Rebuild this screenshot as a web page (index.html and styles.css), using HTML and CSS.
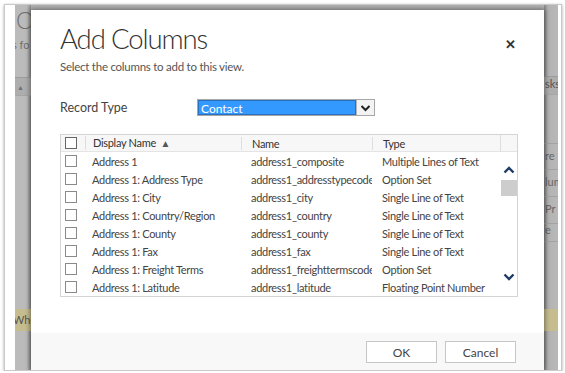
FILE: index.html
```html
<!DOCTYPE html>
<html lang="en">
<head>
    <meta charset="UTF-8">
    <title>Add Columns</title>
    <link rel="stylesheet" href="styles.css">
</head>
<body>
<div class="frame">
    <div class="backdrop">
        <div class="page page-left">
            <div class="pg-title">O</div>
            <div class="pg-sub">s fo</div>
            <div class="pg-bar">&#9650;</div>
            <div class="pg-fill"></div>
            <div class="pg-note">Whe</div>
        </div>

        <div class="dialog">
            <div class="dlg-head">
                <h1>Add Columns</h1>
                <span class="close">&#x2715;</span>
            </div>
            <p class="hint">Select the columns to add to this view.</p>

            <div class="field">
                <label>Record Type</label>
                <div class="select">
                    <span class="select-value">Contact</span>
                    <span class="select-btn">
                        <svg width="11" height="8" viewBox="0 0 11 8"><path d="M1.5 2 L5.5 6 L9.5 2" fill="none" stroke="#222" stroke-width="2"/></svg>
                    </span>
                </div>
            </div>

            <div class="grid">
                <div class="grid-main">
                    <div class="row head">
                        <span class="cell chk"><i class="box"></i></span>
                        <span class="cell first">Display Name <b class="sort">&#9650;</b></span>
                        <span class="cell">Name</span>
                        <span class="cell">Type</span>
                    </div>
                    <div class="row">
                        <span class="cell chk"><i class="box"></i></span>
                        <span class="cell first">Address 1</span>
                        <span class="cell">address1_composite</span>
                        <span class="cell">Multiple Lines of Text</span>
                    </div>
                    <div class="row">
                        <span class="cell chk"><i class="box"></i></span>
                        <span class="cell first">Address 1: Address Type</span>
                        <span class="cell">address1_addresstypecode</span>
                        <span class="cell">Option Set</span>
                    </div>
                    <div class="row">
                        <span class="cell chk"><i class="box"></i></span>
                        <span class="cell first">Address 1: City</span>
                        <span class="cell">address1_city</span>
                        <span class="cell">Single Line of Text</span>
                    </div>
                    <div class="row">
                        <span class="cell chk"><i class="box"></i></span>
                        <span class="cell first">Address 1: Country/Region</span>
                        <span class="cell">address1_country</span>
                        <span class="cell">Single Line of Text</span>
                    </div>
                    <div class="row">
                        <span class="cell chk"><i class="box"></i></span>
                        <span class="cell first">Address 1: County</span>
                        <span class="cell">address1_county</span>
                        <span class="cell">Single Line of Text</span>
                    </div>
                    <div class="row">
                        <span class="cell chk"><i class="box"></i></span>
                        <span class="cell first">Address 1: Fax</span>
                        <span class="cell">address1_fax</span>
                        <span class="cell">Single Line of Text</span>
                    </div>
                    <div class="row">
                        <span class="cell chk"><i class="box"></i></span>
                        <span class="cell first">Address 1: Freight Terms</span>
                        <span class="cell">address1_freighttermscode</span>
                        <span class="cell">Option Set</span>
                    </div>
                    <div class="row">
                        <span class="cell chk"><i class="box"></i></span>
                        <span class="cell first">Address 1: Latitude</span>
                        <span class="cell">address1_latitude</span>
                        <span class="cell">Floating Point Number</span>
                    </div>
                </div>
                <div class="scroll">
                    <div class="scroll-head"></div>
                    <div class="scroll-up">
                        <svg width="12" height="8" viewBox="0 0 12 8"><path d="M1.5 6.5 L6 2 L10.5 6.5" fill="none" stroke="#1e3b66" stroke-width="2.4"/></svg>
                    </div>
                    <div class="thumb"></div>
                    <div class="scroll-space"></div>
                    <div class="scroll-down">
                        <svg width="12" height="8" viewBox="0 0 12 8"><path d="M1.5 1.5 L6 6 L10.5 1.5" fill="none" stroke="#1e3b66" stroke-width="2.4"/></svg>
                    </div>
                </div>
            </div>

            <div class="footer">
                <button class="btn">OK</button>
                <button class="btn">Cancel</button>
            </div>
        </div>

        <div class="page page-right">
            <div class="pg-bar">sks</div>
            <div class="pg-line gap">re</div>
            <div class="pg-line">lum</div>
            <div class="pg-line">Pr</div>
            <div class="pg-line last">e</div>
            <div class="pg-fill"></div>
            <div class="pg-note"></div>
        </div>
    </div>
</div>
</body>
</html>
```

FILE: styles.css
```css
*{ padding: 0; margin: 0; box-sizing: border-box;}
body{
    background: #fff;
    font-family: Lato, "Open Sans", sans-serif;
    color: #444;
}
.frame{
    width: 558px;
    height: 367px;
    margin: 4px 0 0 4px;
    border: 1px solid #c9c9c9;
    padding: 0 3px 0 10px;
    box-shadow: 0 1px 3px rgba(0,0,0,.35);
    background: #fff;
}
.backdrop{
    height: 100%;
    display: flex;
    background: #b5b5b5;
    overflow: hidden;
}

/* page behind the dialog */
.page{
    display: flex;
    flex-direction: column;
    overflow: hidden;
    white-space: nowrap;
    color: #6f6f6f;
    font-size: 11px;
}
.page-left{
    width: 16px;
    background: linear-gradient(to right, #bbb 0, #bbb 12px, #8e8e8e 16px);
}
.page-right{
    width: 14px;
    background: linear-gradient(to right, #8a8a8a 0, #b3b3b3 4px, #b8b8b8 100%);
}
.pg-title{
    font-size: 23px;
    font-weight: 300;
    line-height: 26px;
    margin-top: 2px;
    padding-left: 1px;
}
.pg-sub{
    margin-top: 4px;
    margin-left: -3px;
    line-height: 16px;
}
.pg-bar{
    height: 19px;
    border-top: 1px solid #9c9c9c;
    border-bottom: 1px solid #a6a6a6;
    background: #adadad;
    font-size: 7px;
    line-height: 18px;
    padding-left: 2px;
}
.page-left .pg-bar{
    margin-top: 24px;
}
.page-right .pg-bar{
    margin-top: 71px;
    font-size: 11px;
    line-height: 14px;
    padding-left: 1px;
    color: #555;
}
.pg-line{
    height: 27px;
    line-height: 24px;
    border-bottom: 1px solid #a3a3a3;
    color: #666;
    padding-left: 1px;
}
.pg-line.gap{
    margin-top: 48px;
    border-top: 1px solid #a3a3a3;
}
.pg-line.last{
    height: 18px;
    line-height: 12px;
}
.pg-fill{
    flex: 1;
}
.pg-note{
    height: 22px;
    margin-bottom: 39px;
    background: #c5bd8f;
    color: #555;
    line-height: 22px;
    margin-left: -2px;
}
.page-right .pg-note{
    margin-left: 0;
}

/* dialog */
.dialog{
    width: 513px;
    flex: none;
    margin-top: 5px;
    background: #fff;
    box-shadow: 0 0 5px 1px rgba(0,0,0,.45);
    display: flex;
    flex-direction: column;
    position: relative;
    z-index: 1;
}
.dlg-head{
    display: flex;
    justify-content: space-between;
    align-items: flex-start;
    padding: 11px 28px 0 29px;
}
h1{
    font-size: 27.5px;
    font-weight: 300;
    line-height: 36px;
    color: #333;
    letter-spacing: -1.1px;
}
.close{
    font-size: 13px;
    color: #333;
    margin-top: 15px;
    font-weight: bold;
}
.hint{
    font-size: 11.5px;
    letter-spacing: -0.25px;
    padding-left: 29px;
    margin-top: 2px;
    line-height: 16px;
    color: #555;
}
.field{
    display: flex;
    align-items: center;
    padding-left: 29px;
    margin-top: 24px;
    font-size: 12.5px;
}
.field label{
    width: 137px;
    color: #444;
}
.select{
    width: 178px;
    height: 17px;
    display: flex;
    border: 1px solid #a7a7a7;
}
.select-value{
    flex: 1;
    background: #3399ff;
    color: #fff;
    line-height: 15px;
    padding-left: 2px;
    font-size: 12px;
    border: 1px solid #2a6fc0;
}
.select-btn{
    width: 18px;
    display: flex;
    align-items: center;
    justify-content: center;
    background: #f3f3f3;
    border-left: 1px solid #b5b5b5;
}

/* columns grid */
.grid{
    display: flex;
    width: 458px;
    height: 163px;
    margin: 18px 0 0 29px;
    border: 1px solid #d4d4d4;
    font-size: 11px;
    letter-spacing: -0.3px;
}
.grid-main{
    width: 439px;
}
.row{
    display: grid;
    grid-template-columns: 24px 156px 131px 128px;
    height: 18px;
    align-items: center;
    color: #444;
}
.row.head{
    height: 17px;
    background: #f7f7f7;
    border-bottom: 1px solid #e4e4e4;
    color: #333;
}
.cell{
    padding-left: 10px;
    white-space: nowrap;
    overflow: hidden;
    line-height: 17px;
}
.cell.first{
    padding-left: 7px;
}
.row.head .cell{
    border-left: 1px solid #dedede;
    line-height: 13px;
}
.row.head .cell.chk{
    border-left: 0;
}
.cell.chk{
    padding-left: 4px;
    display: flex;
    align-items: center;
}
.box{
    display: block;
    width: 12px;
    height: 12px;
    border: 1px solid #8a8a8a;
    background: #fff;
}
.row.head .box{
    border-color: #666;
}
.sort{
    font-size: 10px;
    font-weight: normal;
    color: #555;
    margin-left: 2px;
}
.scroll{
    width: 17px;
    display: flex;
    flex-direction: column;
}
.scroll-head{
    height: 17px;
    background: #f7f7f7;
    border-left: 1px solid #dedede;
    border-bottom: 1px solid #e4e4e4;
}
.scroll-up,
.scroll-down{
    height: 28px;
    display: flex;
    justify-content: center;
    align-items: center;
}
.scroll-up{
    padding-top: 8px;
}
.scroll-down{
    padding-bottom: 10px;
}
.thumb{
    height: 16px;
    margin-left: 1px;
    background: #cdcdcd;
}
.scroll-space{
    flex: 1;
}

/* footer */
.footer{
    margin-top: 36px;
    flex: 1;
    background: #f8f8f8;
    display: flex;
    justify-content: flex-end;
    gap: 8px;
    padding: 8px 28px 0 0;
}
.btn{
    width: 71px;
    height: 22px;
    background: #fff;
    border: 1px solid #c6c6c6;
    font-family: Lato, "Open Sans", sans-serif;
    font-size: 12px;
    color: #444;
}
```
